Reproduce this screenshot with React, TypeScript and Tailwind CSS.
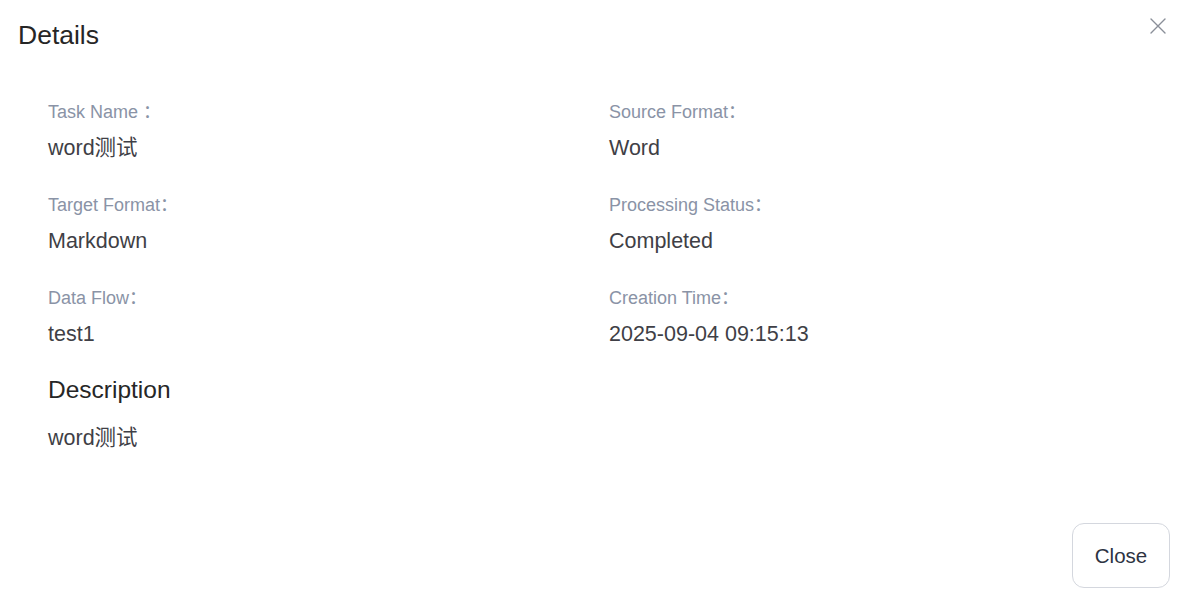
import React from "react";

const font = { fontFamily: '"Liberation Sans", "Noto Sans CJK SC", Arial, sans-serif' };

function Field({ label, value }: { label: string; value: string }) {
  return (
    <div className="flex flex-col">
      <div className="text-[18px] leading-[24px] text-[#8a93a6]">{label}</div>
      <div className="mt-[10px] text-[21.5px] leading-[28px] text-[#3f3f46]">{value}</div>
    </div>
  );
}

export default function App() {
  return (
    <div className="w-[1186px] h-[608px] bg-white relative flex flex-col" style={font}>
      <div className="flex items-start justify-between pl-[18px] pr-[18px] pt-[19px]">
        <h1 className="text-[26.5px] leading-[32px] text-[#262626]">Details</h1>
        <button className="mt-[-3px] text-[#8a8f99]" aria-label="close">
          <svg width="20" height="20" viewBox="0 0 20 20" fill="none" stroke="currentColor" strokeWidth="1.4" strokeLinecap="round">
            <path d="M3 3 L17 17 M17 3 L3 17" />
          </svg>
        </button>
      </div>
      <div className="pl-[48px] pr-[16px] pt-[49px]">
        <div className="grid grid-cols-2 gap-y-[31px]">
          <Field label="Task Name ：" value="word测试" />
          <Field label="Source Format：" value="Word" />
          <Field label="Target Format：" value="Markdown" />
          <Field label="Processing Status：" value="Completed" />
          <Field label="Data Flow：" value="test1" />
          <Field label="Creation Time：" value="2025-09-04 09:15:13" />
        </div>
        <h2 className="mt-[26px] text-[24.5px] leading-[32px] text-[#262626]">Description</h2>
        <div className="mt-[18px] text-[21.5px] leading-[28px] text-[#3f3f46]">word测试</div>
      </div>
      <div className="flex-1" />
      <div className="flex justify-end pr-[16px] pb-[20px]">
        <button className="w-[98px] h-[65px] pt-[2px] rounded-[12px] border border-[#d4d7de] text-[20.5px] text-[#2d3342] bg-white">
          Close
        </button>
      </div>
    </div>
  );
}
